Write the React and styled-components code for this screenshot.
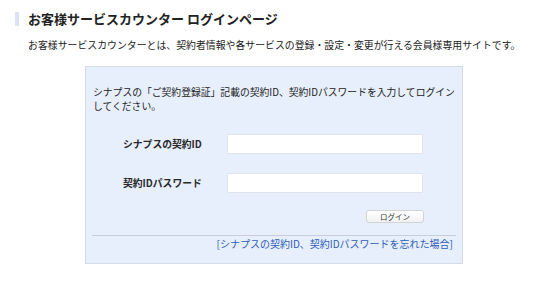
import React from "react";
import styled, { createGlobalStyle } from "styled-components";

const GlobalStyle = createGlobalStyle`
  html, body {
    margin: 0;
    padding: 0;
    background: #ffffff;
  }
  body {
    font-family: "Noto Sans CJK JP", "Noto Sans", "Liberation Sans", sans-serif;
    color: #222222;
  }
`;

const Page = styled.div`
  width: 550px;
  height: 281px;
  overflow: hidden;
`;

const TitleRow = styled.div`
  display: flex;
  align-items: center;
  gap: 9px;
  margin-top: 11px;
  padding-left: 15px;
`;

const Accent = styled.span`
  width: 4px;
  height: 14px;
  background: #dde3f6;
`;

const Title = styled.h1`
  margin: 0;
  font-size: 13px;
  line-height: 15px;
  font-weight: 700;
  color: #222;
`;

const Lead = styled.p`
  margin: 12px 0 0;
  padding-left: 28px;
  font-size: 9.9px;
  line-height: 14px;
  white-space: nowrap;
`;

const LoginBox = styled.section`
  box-sizing: border-box;
  width: 378px;
  height: 198px;
  margin: 14px 0 0 85px;
  background: #e7effc;
  border: 1px solid #d5dce7;
  display: flex;
  flex-direction: column;
`;

const Intro = styled.p`
  margin: 0;
  padding: 18px 7px 0;
  font-size: 9.8px;
  line-height: 14px;
  white-space: nowrap;
`;

const Form = styled.div`
  display: grid;
  grid-template-columns: 104px 196px;
  row-gap: 19px;
  align-items: center;
  margin-top: 21px;
  padding-left: 37px;
`;

const Label = styled.label`
  font-size: 9.8px;
  font-weight: 700;
  line-height: 14px;
  color: #2a2a2a;
`;

const Field = styled.input`
  box-sizing: border-box;
  width: 196px;
  height: 20px;
  margin: 0;
  border: 1px solid #dfe4ec;
  border-radius: 1px;
  background: #ffffff;
  outline: none;
`;

const Actions = styled.div`
  display: flex;
  justify-content: flex-end;
  margin-top: 17px;
  padding-right: 38px;
`;

const Button = styled.button`
  box-sizing: border-box;
  width: 58px;
  height: 13px;
  padding: 0;
  border: 1px solid #d3d3d3;
  border-radius: 3px;
  background: linear-gradient(#ffffff, #f2f2f2);
  font-family: inherit;
  font-size: 7.5px;
  line-height: 11px;
  color: #333;
`;

const Footer = styled.div`
  margin: 12px 6px 0;
  border-top: 1px solid #c8cfdb;
  display: flex;
  justify-content: flex-end;
  padding: 1px 3px 0 0;
`;

const Forgot = styled.a`
  font-size: 10px;
  line-height: 13px;
  color: #2f5db8;
  text-decoration: none;
`;

export default function App() {
  return (
    <Page>
      <GlobalStyle />
      <TitleRow>
        <Accent />
        <Title>お客様サービスカウンター ログインページ</Title>
      </TitleRow>
      <Lead>
        お客様サービスカウンターとは、契約者情報や各サービスの登録・設定・変更が行える会員様専用サイトです。
      </Lead>
      <LoginBox>
        <Intro>
          シナプスの「ご契約登録証」記載の契約ID、契約IDパスワードを入力してログイン
          <br />
          してください。
        </Intro>
        <Form>
          <Label htmlFor="cid">シナプスの契約ID</Label>
          <Field id="cid" type="text" />
          <Label htmlFor="cpw">契約IDパスワード</Label>
          <Field id="cpw" type="password" />
        </Form>
        <Actions>
          <Button type="button">ログイン</Button>
        </Actions>
        <Footer>
          <Forgot href="#">[シナプスの契約ID、契約IDパスワードを忘れた場合]</Forgot>
        </Footer>
      </LoginBox>
    </Page>
  );
}
